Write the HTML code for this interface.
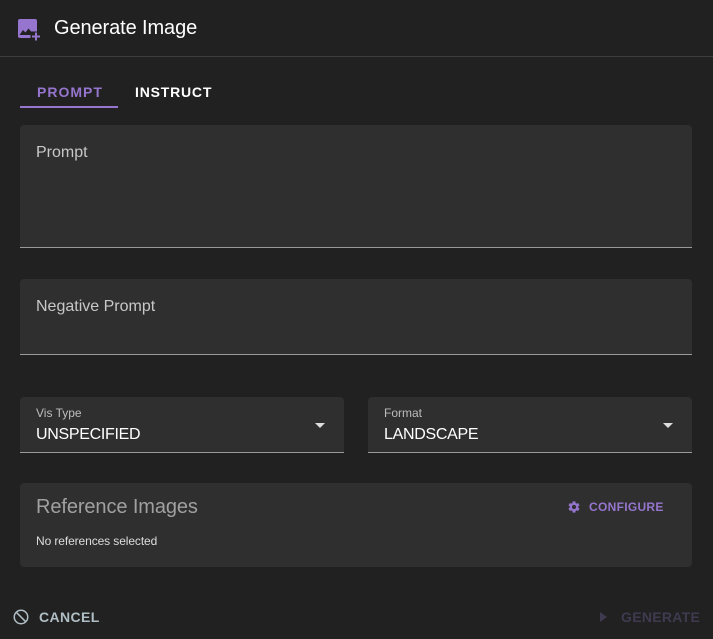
<!DOCTYPE html>
<html><head><style>
*{box-sizing:border-box;margin:0;padding:0}
body{width:713px;height:639px;background:#212121;font-family:"Liberation Sans",sans-serif;color:#fff;position:relative;overflow:hidden}
.abs{position:absolute}
.field{position:absolute;background:#2f2f2f;border-radius:4px 4px 0 0;border-bottom:1px solid #9a9a9a}
.lbl{position:absolute;color:#c8c8c8;font-size:16px}
.sm{position:absolute;color:#bdbdbd;font-size:12px}
.val{position:absolute;color:#fff;font-size:16px;letter-spacing:-0.3px}
.arrow{position:absolute;width:0;height:0;border-left:5px solid transparent;border-right:5px solid transparent;border-top:5px solid #ddd}
</style></head><body>
<svg class="abs" style="left:18px;top:19px" width="24" height="24" viewBox="0 0 24 24">
<rect x="0" y="0" width="19" height="19" rx="2" fill="#9575cd"/>
<rect x="12.5" y="12.5" width="12" height="12" fill="#212121"/>
<path d="M1.5 16 L5 11 L7.5 13.5 L10.5 9.5 L13 12.5 L13 16 Z" fill="#212121"/>
<path d="M18 13.5v8M14 17.5h8" stroke="#9575cd" stroke-width="2"/>
</svg>
<div class="abs" style="left:54px;top:17px;font-size:20px;color:#fff;letter-spacing:-0.1px">Generate Image</div>
<div class="abs" style="left:0;top:56px;width:713px;height:1px;background:#3d3d3d"></div>
<div class="abs" style="left:37px;top:84px;font-size:14px;font-weight:bold;letter-spacing:1px;color:#9575cd">PROMPT</div>
<div class="abs" style="left:20px;top:106px;width:98px;height:2px;background:#9575cd"></div>
<div class="abs" style="left:135px;top:84px;font-size:14px;font-weight:bold;letter-spacing:0.8px;color:#fff">INSTRUCT</div>
<div class="field" style="left:20px;top:125px;width:672px;height:123px"></div>
<div class="lbl" style="left:36px;top:144px">Prompt</div>
<div class="field" style="left:20px;top:279px;width:672px;height:76px"></div>
<div class="lbl" style="left:36px;top:298px">Negative Prompt</div>
<div class="field" style="left:20px;top:397px;width:324px;height:56px"></div>
<div class="sm" style="left:36px;top:406px">Vis Type</div>
<div class="val" style="left:36px;top:426px">UNSPECIFIED</div>
<div class="arrow" style="left:315px;top:423px"></div>
<div class="field" style="left:368px;top:397px;width:324px;height:56px"></div>
<div class="sm" style="left:384px;top:406px">Format</div>
<div class="val" style="left:384px;top:426px">LANDSCAPE</div>
<div class="arrow" style="left:663px;top:423px"></div>
<div class="abs" style="left:20px;top:483px;width:672px;height:84px;background:#2f2f2f;border-radius:4px"></div>
<div class="abs" style="left:36px;top:496px;font-size:20px;color:#a0a0a0;letter-spacing:-0.1px">Reference Images</div>
<div class="abs" style="left:36px;top:534px;font-size:12px;color:#ddd;letter-spacing:-0.1px">No references selected</div>
<svg class="abs" style="left:567px;top:500px" width="14" height="14" viewBox="0 0 24 24"><path fill="#9575cd" d="M19.14 12.94c.04-.3.06-.61.06-.94 0-.32-.02-.64-.07-.94l2.03-1.58a.49.49 0 00.12-.61l-1.920-3.32a.488.488 0 00-.59-.22l-2.39.96c-.5-.38-1.03-.7-1.62-.94l-.36-2.54a.484.484 0 00-.48-.41h-3.84c-.24 0-.43.17-.47.41l-.36 2.540c-.59.24-1.130.57-1.62.94l-2.39-.96c-.22-.08-.47 0-.59.22L2.74 8.87c-.12.21-.08.47.12.61l2.03 1.58c-.05.3-.09.63-.09.94s.02.64.07.94l-2.03 1.58a.49.49 0 00-.12.61l1.92 3.32c.12.22.37.29.59.22l2.39-.96c.5.38 1.03.7 1.62.94l.36 2.54c.05.24.24.41.48.41h3.84c.24 0 .44-.17.47-.41l.36-2.54c.59-.24 1.13-.56 1.62-.94l2.39.96c.22.08.47 0 .59-.22l1.92-3.32c.12-.22.07-.47-.12-.61l-2.01-1.58zM12 15.6c-1.98 0-3.6-1.62-3.6-3.6s1.62-3.6 3.6-3.6 3.6 1.62 3.6 3.6-1.62 3.6-3.6 3.6z"/></svg>
<div class="abs" style="left:589px;top:500px;font-size:12px;font-weight:bold;letter-spacing:0.3px;color:#9575cd">CONFIGURE</div>
<svg class="abs" style="left:12px;top:608px" width="18" height="18" viewBox="0 0 24 24"><circle cx="12" cy="12" r="9" fill="none" stroke="#b0bec5" stroke-width="2"/><path d="M5.6 5.6l12.8 12.8" stroke="#b0bec5" stroke-width="2"/></svg>
<div class="abs" style="left:39px;top:609px;font-size:14px;font-weight:bold;letter-spacing:0.4px;color:#b0bec5">CANCEL</div>
<div class="abs" style="left:600px;top:612px;width:0;height:0;border-top:5px solid transparent;border-bottom:5px solid transparent;border-left:7px solid #3f3a4f"></div>
<div class="abs" style="left:621px;top:609px;font-size:14px;font-weight:bold;letter-spacing:0.3px;color:#3f3a4f">GENERATE</div>
</body></html>
